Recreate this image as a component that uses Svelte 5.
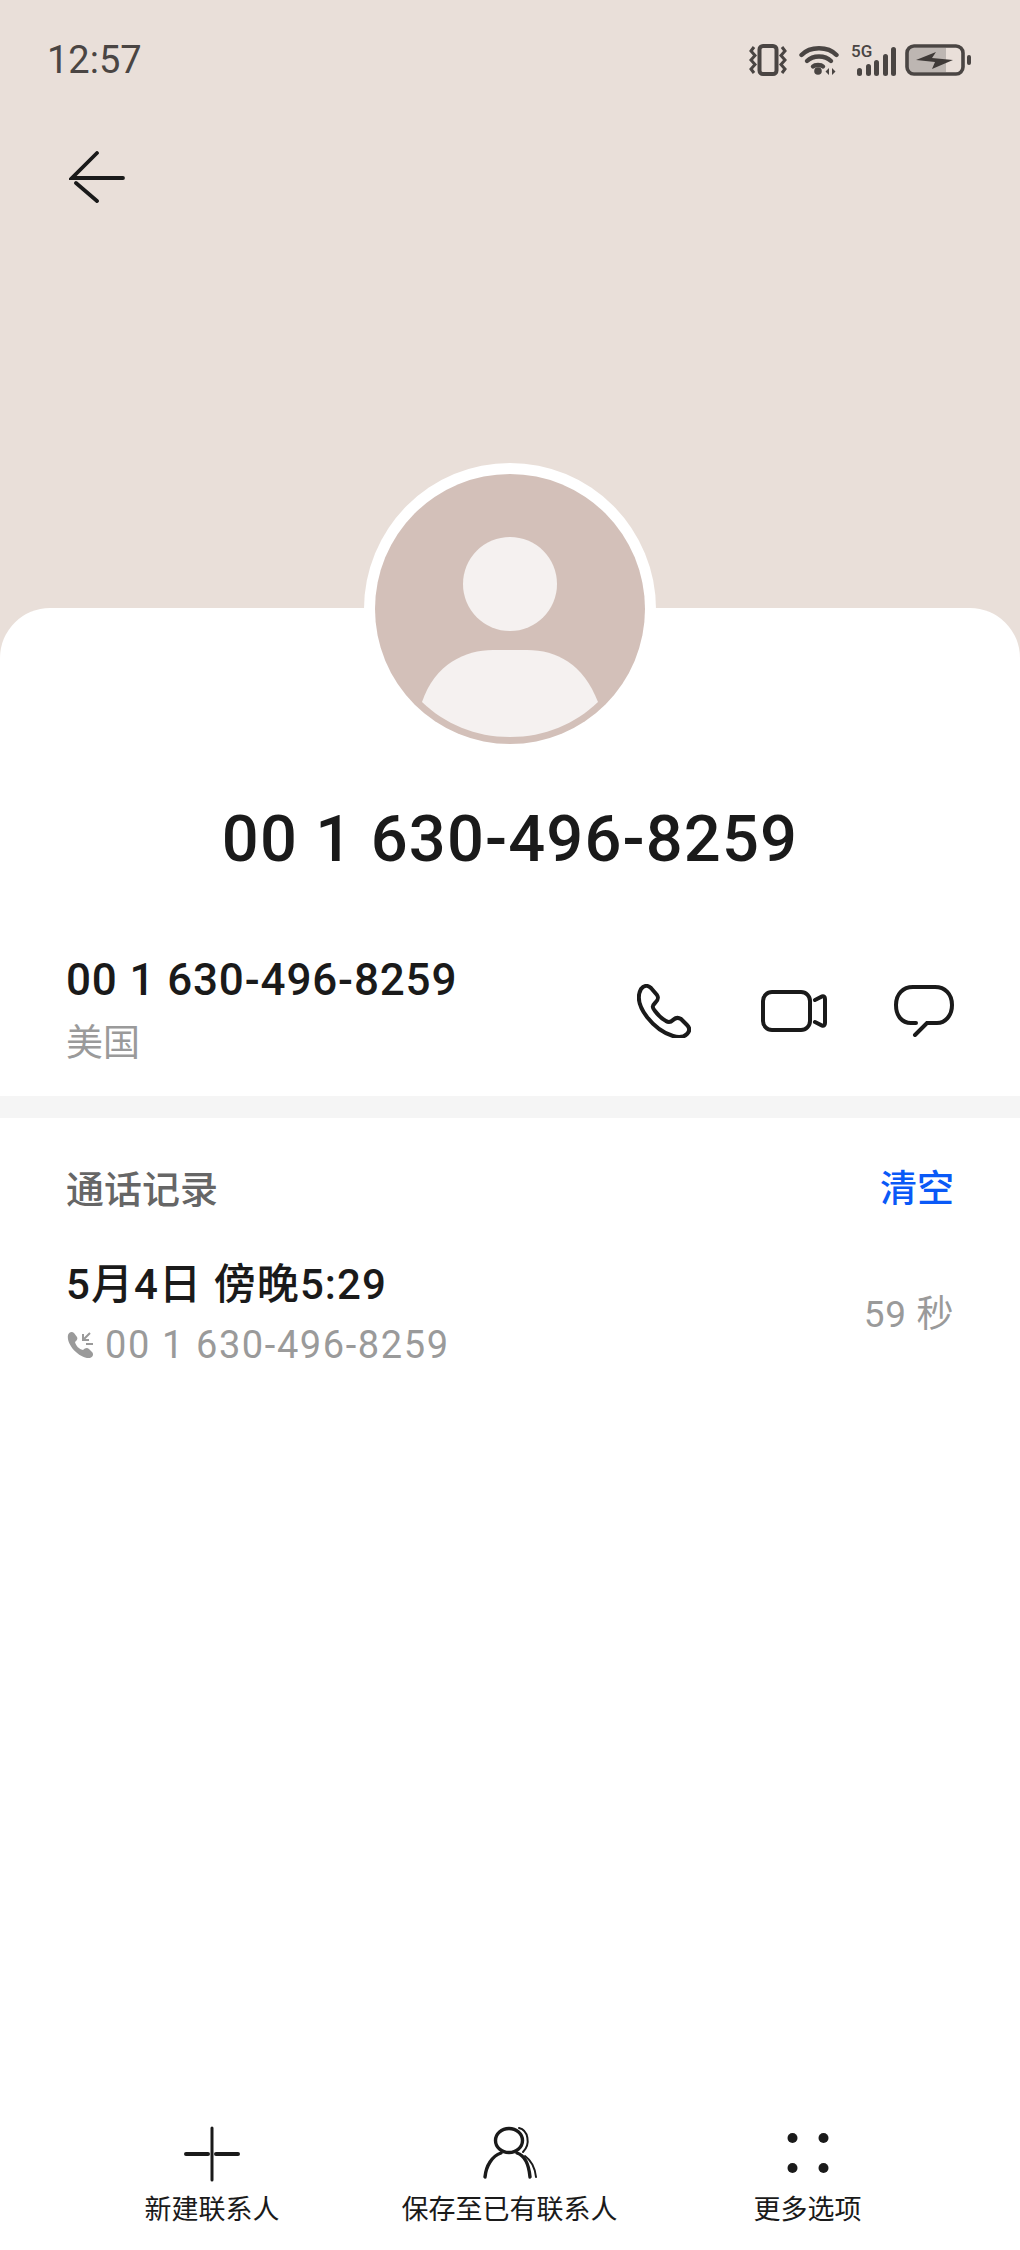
<script>
	const number = '00 1 630-496-8259';
</script>

<div class="page">
	<header class="hero">
		<div class="status">
			<span class="time">12:57</span>
			<div class="status-icons">
				<svg class="vib" viewBox="0 0 38 32" fill="none" stroke="#4a4543">
					<rect x="10.5" y="2" width="17" height="28" rx="3.5" stroke-width="4" />
					<path d="M5 3 L2 7 L6 11.5 L2 16 L6 20.5 L2 25 L5 29 M33 3 L36 7 L32 11.5 L36 16 L32 20.5 L36 25 L33 29" stroke-width="3" />
				</svg>
				<svg class="wifi" viewBox="0 0 40 30" fill="none" stroke="#4a4543" stroke-width="4.4" stroke-linecap="round">
					<path d="M2.5 10 C11 1 29 1 37.5 10" />
					<path d="M8 16 C14 10 26 10 32 16" />
					<path d="M14 21.5 C16 19.5 22 19.5 24 21.5" />
					<circle cx="19" cy="26" r="3.8" fill="#4a4543" stroke="none" />
					<path d="M30 23 L26.5 26.5 L30 30 Z M33 23 L36.5 26.5 L33 30 Z" fill="#4a4543" stroke="none" />
				</svg>
				<div class="signal">
					<span class="five-g">5G</span>
					<i style="height:8px"></i>
					<i style="height:12px"></i>
					<i style="height:16px"></i>
					<i style="height:22px"></i>
					<i style="height:29px"></i>
				</div>
				<svg class="battery" viewBox="0 0 68 32" fill="none">
					<rect x="3" y="4" width="38" height="24" fill="#bdb6b2" />
					<rect x="2" y="2" width="56" height="28" rx="7" stroke="#4a4543" stroke-width="3.6" />
					<path d="M11 16 L31 8 L27 14 L48 16 L27 25 L30 18 Z" fill="#3f3a38" />
					<rect x="62" y="11" width="4" height="10" rx="2" fill="#4a4543" />
				</svg>
			</div>
		</div>
		<svg class="back" viewBox="0 0 56 52" fill="none" stroke="#1a1a1a" stroke-width="3.8" stroke-linecap="round">
			<path d="M28 2 L3 27 H54" />
			<path d="M7 32 L28 50" />
		</svg>
	</header>

	<main class="card">
		<div class="ring">
			<svg class="avatar" viewBox="0 0 270 270">
				<circle cx="135" cy="135" r="135" fill="#d3c0b9" />
				<circle cx="135" cy="110" r="47" fill="#f5f1f0" />
				<path d="M47 228 C60 190 90 176 118 176 H152 C182 176 208 190 223 228 C200 250 170 263 135 263 C100 263 70 250 47 228 Z" fill="#f5f1f0" />
			</svg>
		</div>

		<h1>{number}</h1>

		<section class="contact">
			<div>
				<div class="num">{number}</div>
				<div class="place">美国</div>
			</div>
			<div class="actions">
				<svg class="act-phone" viewBox="0 0 54 54" fill="none" stroke="#1a1a1a" stroke-width="4" stroke-linejoin="round">
					<path d="M4 5 C7 1 11 1 14 4 L20 11 C22 14 21 16 18 19 C15 22 15 23 18 27 C21 31 25 35 29 37 C32 39 34 38 36 36 C38 34 41 33 44 35 L50 41 C53 44 53 47 50 50 C47 53 42 54 36 52 C26 49 17 42 10 33 C4 25 -1 14 4 5 Z" />
				</svg>
				<svg class="act-video" viewBox="0 0 66 42" fill="none" stroke="#1a1a1a" stroke-width="4" stroke-linecap="round">
					<rect x="2" y="2" width="47" height="38" rx="9" />
					<path d="M54 10 L61 6.5 C63 6 64 7 64 9 V33 C64 35 63 36 61 35.5 L54 32" />
				</svg>
				<svg class="act-msg" viewBox="0 0 60 52" fill="none" stroke="#1a1a1a" stroke-width="4" stroke-linecap="round">
					<path d="M22 38 H17 C8 38 2 31 2 20 C2 9 9 2 19 2 H41 C51 2 58 9 58 20 C58 31 51 38 43 38 H33 L21 50" />
				</svg>
			</div>
		</section>

		<div class="divider"></div>

		<section class="log">
			<div class="log-head">
				<span class="log-title">通话记录</span>
				<span class="clear">清空</span>
			</div>
			<div class="log-row">
				<div>
					<div class="when">5月4日 傍晚5:29</div>
					<div class="who">
						<svg viewBox="0 0 28 28" fill="#9a9a9a">
							<path d="M2 4 C3 1 6 0 8 2 L11 6 C12 8 11 9 9 11 C10 15 13 18 17 19 C19 17 21 16 23 18 L26 21 C28 23 27 26 24 27 C14 28 0 14 2 4 Z" />
							<path d="M24 2 L17 9 M17 3 V9 H23 M20 13 H27" fill="none" stroke="#9a9a9a" stroke-width="2" />
						</svg>
						<span>{number}</span>
					</div>
				</div>
				<span class="dur">59 秒</span>
			</div>
		</section>

		<nav class="bar">
			<div class="tool">
				<svg viewBox="0 0 56 56" fill="none" stroke="#1a1a1a" stroke-linecap="round">
					<path d="M28 2 V54" stroke-width="3" />
					<path d="M2 28 H24 M32 28 H54" stroke-width="4" />
				</svg>
				<span>新建联系人</span>
			</div>
			<div class="tool">
				<svg viewBox="0 0 56 56" fill="none" stroke="#1a1a1a" stroke-linecap="round">
					<ellipse cx="27" cy="14.5" rx="13.5" ry="12" stroke-width="3.4" />
					<path d="M3 51 C4 40 10 30 19 27 M35 27 C44 30 47 40 48 51" stroke-width="3.4" />
					<path d="M37 2 C46 4 49 18 41 26 M43 30 C50 35 53 42 54 51" stroke-width="2" />
				</svg>
				<span>保存至已有联系人</span>
			</div>
			<div class="tool">
				<svg viewBox="0 0 56 56" fill="#1a1a1a">
					<circle cx="12.5" cy="12" r="5" />
					<circle cx="43.5" cy="12" r="5" />
					<circle cx="12.5" cy="42" r="5" />
					<circle cx="43.5" cy="42" r="5" />
				</svg>
				<span>更多选项</span>
			</div>
		</nav>
	</main>
</div>

<style>
	:global(body) {
		margin: 0;
		background: #e9dfd9;
	}

	.page {
		width: 1020px;
		height: 2250px;
		display: flex;
		flex-direction: column;
		font-family: Roboto, 'Noto Sans CJK SC', sans-serif;
		color: #1a1a1a;
		background: #e9dfd9;
		overflow: hidden;
	}

	.hero {
		height: 608px;
		flex: none;
		box-sizing: border-box;
		padding: 40px 48px 0 47px;
	}

	.status {
		display: flex;
		justify-content: space-between;
		align-items: center;
		height: 40px;
	}

	.time {
		font-size: 38px;
		color: #4a4543;
	}

	.status-icons {
		display: flex;
		align-items: center;
		margin-right: -1px;
	}

	.vib {
		width: 38px;
		height: 32px;
	}

	.wifi {
		width: 40px;
		height: 30px;
		margin-left: 12px;
	}

	.signal {
		display: flex;
		align-items: flex-end;
		gap: 3.5px;
		height: 32px;
		margin-left: 12px;
		position: relative;
		padding-left: 6px;
	}

	.signal i {
		width: 5px;
		border-radius: 3px;
		background: #4a4543;
	}

	.five-g {
		position: absolute;
		left: 0;
		top: -3px;
		font-size: 17px;
		font-weight: 500;
		color: #4a4543;
	}

	.battery {
		width: 68px;
		height: 32px;
		margin-left: 9px;
	}

	.back {
		display: block;
		width: 56px;
		height: 52px;
		margin: 71px 0 0 22px;
	}

	.card {
		flex: 1;
		display: flex;
		flex-direction: column;
		background: #fff;
		border-radius: 50px 50px 0 0;
	}

	.ring {
		width: 292px;
		height: 292px;
		box-sizing: border-box;
		padding: 11px;
		margin: -145px auto 0;
		border-radius: 50%;
		background: #fff;
	}

	.avatar {
		display: block;
		width: 270px;
		height: 270px;
	}

	h1 {
		margin: 46px 0 0;
		text-align: center;
		font-size: 65px;
		line-height: 76px;
		font-weight: 500;
		letter-spacing: 1.15px;
	}

	.contact {
		display: flex;
		justify-content: space-between;
		align-items: center;
		height: 172px;
		margin-top: 47px;
		padding: 0 66px;
	}

	.num {
		font-size: 44px;
		line-height: 56px;
		font-weight: 500;
		letter-spacing: 0.85px;
	}

	.place {
		font-size: 37px;
		line-height: 48px;
		margin-top: 12px;
		color: #9a9a9a;
	}

	.actions {
		display: flex;
		align-items: center;
		margin-top: 2px;
	}

	.act-phone {
		width: 54px;
		height: 54px;
	}

	.act-video {
		width: 66px;
		height: 42px;
		margin-left: 70px;
	}

	.act-msg {
		width: 60px;
		height: 52px;
		margin-left: 67px;
	}

	.divider {
		height: 22px;
		background: #f5f5f5;
	}

	.log {
		padding: 44px 66px 0;
	}

	.log-head {
		display: flex;
		justify-content: space-between;
		align-items: center;
		height: 48px;
	}

	.log-title {
		font-size: 38px;
		font-weight: 500;
		color: #666;
	}

	.clear {
		font-size: 37px;
		font-weight: 500;
		color: #0a59f7;
	}

	.log-row {
		display: flex;
		justify-content: space-between;
		align-items: center;
		margin-top: 49px;
	}

	.when {
		font-size: 42px;
		line-height: 52px;
		font-weight: 500;
		letter-spacing: 1.1px;
	}

	.who {
		display: flex;
		align-items: center;
		margin-top: 9px;
		font-size: 38px;
		line-height: 50px;
		letter-spacing: 1.6px;
		color: #9a9a9a;
	}

	.who svg {
		width: 28px;
		height: 28px;
		margin-right: 11px;
	}

	.dur {
		font-size: 37px;
		letter-spacing: 0.6px;
		margin-bottom: 8px;
		color: #9a9a9a;
	}

	.bar {
		margin-top: auto;
		display: grid;
		grid-template-columns: 297px 298px 298px;
		justify-content: center;
		padding-bottom: 22px;
	}

	.tool {
		display: flex;
		flex-direction: column;
		align-items: center;
		font-size: 27px;
		line-height: 36px;
	}

	.tool svg {
		width: 56px;
		height: 56px;
		margin-bottom: 10px;
	}
</style>
